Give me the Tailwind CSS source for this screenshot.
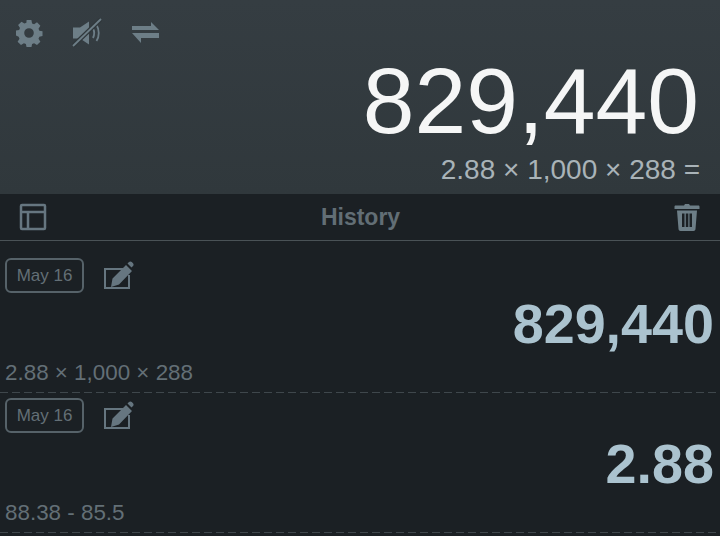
<!DOCTYPE html>
<html lang="en">
<head>
    <meta charset="UTF-8">
    <title>Calculator</title>
    <script src="https://cdn.jsdelivr.net/npm/@tailwindcss/browser@4"></script>
</head>
<body class="w-[720px] h-[536px] overflow-hidden bg-[#1b2024] font-['Liberation_Sans',Arial,sans-serif]">
    <!-- display -->
    <div class="h-[194px] bg-gradient-to-b from-[#353d42] to-[#30383c] relative">
        <div class="flex items-center h-[66px] pl-[15px] gap-[29px] text-[#6d7e87]">
            <svg class="w-[28px] h-[28px]" viewBox="0 0 28 28"><path fill="currentColor" fill-rule="evenodd" d="M11.6 1h4.8l.7 3.400 2 .85 2.900-1.900 3.400 3.400-1.900 2.900.85 2 3.150.65v4.800l-3.150.65-.85 2 1.900 2.900-3.400 3.400-2.900-1.900-2 .85-.7 3.400h-4.800l-.7-3.400-2-.85-2.900 1.900-3.400-3.400 1.900-2.900-.85-2L1 16.400v-4.800l3.150-.65.85-2-1.900-2.900 3.400-3.400 2.900 1.900 2-.85zM14 9.200a4.800 4.800 0 1 0 0 9.600 4.800 4.800 0 0 0 0-9.600z"/></svg>
            <svg class="w-[30px] h-[30px]" viewBox="0 0 30 30"><path fill="currentColor" d="M1 9.500h7l9-6v23l-9-6H1z"/><path fill="none" stroke="currentColor" stroke-width="1.800" d="M21 10.500c1.500 2.800 1.500 6.500 0 9.500M24.500 7c3 4.500 3 11.500 0 16"/><path stroke="#30383c" stroke-width="4.500" d="M1 28 29 1"/><path stroke="currentColor" stroke-width="1.800" d="M1 28 29 1"/></svg>
            <svg class="w-[28px] h-[24px]" viewBox="0 0 28 24"><path fill="currentColor" d="M1 5h19V1l8 8H1zM28 12v5H10v5l-9-10z"/></svg>
        </div>
        <div class="absolute right-[21px] top-[51px] text-[93px] leading-[100px] text-[#f5f6f6]">829,440</div>
        <div class="absolute right-[20px] top-[154px] text-[28px] leading-[32px] text-[#a9b3b8]">2.88 × 1,000 × 288 =</div>
    </div>

    <!-- history header -->
    <div class="h-[47px] flex items-center justify-between pl-[19px] pr-[20px] border-b border-[#4a5256] relative">
        <svg class="w-[28px] h-[28px] text-[#667680]" viewBox="0 0 28 28" fill="none" stroke="currentColor" stroke-width="2.500"><rect x="2" y="2" width="24" height="24" rx="1"/><path d="M2 9h24M9 9v17"/></svg>
        <div class="text-[23px] font-bold text-[#626e75]">History</div>
        <svg class="w-[26px] h-[28px] text-[#6d7e87]" viewBox="0 0 26 28"><path fill="currentColor" fill-rule="evenodd" d="M10 2.500 11 1h4l1 1.500h8.500c.5 0 1 .5 1 1V6H.5V3.500c0-.5.5-1 1-1zM3 7.500h20L21.500 26c0 1-1 2-2 2h-13c-1 0-2-1-2-2zM8 10.500V24h2.500V10.500zM11.800 10.500V24h2.500V10.500zM15.500 10.500V24H18V10.500z"/></svg>
    </div>

    <!-- history rows -->
    <div class="h-[152px] relative px-[5px]">
        <div class="flex items-center gap-[19px] pt-[17px]">
            <div class="w-[79px] h-[35px] border-2 border-[#566269] rounded-[6px] flex items-center justify-center text-[17px] text-[#636f76]">May 16</div>
            <svg class="w-[32px] h-[31px] text-[#667680]" viewBox="0 0 32 31"><path fill="none" stroke="currentColor" stroke-width="2" d="M20 9H2v19h24V15"/><path fill="currentColor" d="M8 27l1.500-8.500L23 5l6 6-13 13.500zM24.500 3.500 26 2c.8-.8 2-.8 2.800 0L30 3.200c.8.800.8 2 0 2.800l-1.500 1.500z"/></svg>
        </div>
        <div class="absolute right-[6px] top-[51px] text-[55.700px] leading-[64px] font-bold text-[#abc3cf]">829,440</div>
        <div class="absolute left-[5px] top-[119px] text-[22.400px] leading-[26px] text-[#636f76]">2.88 × 1,000 × 288</div>
        <div class="absolute left-0 right-0 bottom-0 h-px bg-[repeating-linear-gradient(90deg,#3f474c_0,#3f474c_8px,transparent_8px,transparent_12px)]"></div>
    </div>
    <div class="h-[140px] relative px-[5px]">
        <div class="flex items-center gap-[19px] pt-[5px]">
            <div class="w-[79px] h-[35px] border-2 border-[#566269] rounded-[6px] flex items-center justify-center text-[17px] text-[#636f76]">May 16</div>
            <svg class="w-[32px] h-[31px] text-[#667680]" viewBox="0 0 32 31"><path fill="none" stroke="currentColor" stroke-width="2" d="M20 9H2v19h24V15"/><path fill="currentColor" d="M8 27l1.500-8.500L23 5l6 6-13 13.500zM24.500 3.500 26 2c.8-.8 2-.8 2.800 0L30 3.200c.8.800.8 2 0 2.800l-1.500 1.500z"/></svg>
        </div>
        <div class="absolute right-[6px] top-[39px] text-[55.700px] leading-[64px] font-bold text-[#abc3cf]">2.88</div>
        <div class="absolute left-[5px] top-[107px] text-[22.400px] leading-[26px] text-[#636f76]">88.38 - 85.5</div>
        <div class="absolute left-0 right-0 bottom-0 h-px bg-[repeating-linear-gradient(90deg,#3f474c_0,#3f474c_8px,transparent_8px,transparent_12px)]"></div>
    </div>
</body>
</html>
